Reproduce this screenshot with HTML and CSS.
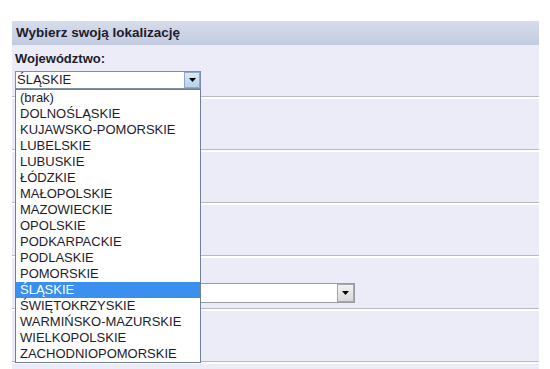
FILE: index.html
```html
<!DOCTYPE html>
<html lang="pl">
<head>
    <meta charset="UTF-8">
    <meta name="viewport" content="width=device-width, initial-scale=1.0">
    <title>Wybierz swoją lokalizację</title>
    <link rel="stylesheet" href="styles.css">
</head>
<body>
    <div id="location-panel">
        <div class="panel-head">Wybierz swoją lokalizację</div>

        <div class="row row-first">
            <div class="label">Województwo:</div>
            <div class="combo combo-open">
                <span class="combo-value">ŚLĄSKIE</span>
                <span class="combo-btn">
                    <svg width="7" height="4" viewBox="0 0 7 4"><path d="M0 0h7L3.5 4z" fill="#000"/></svg>
                </span>
                <ul class="combo-list">
                    <li>(brak)</li>
                    <li>DOLNOŚLĄSKIE</li>
                    <li>KUJAWSKO-POMORSKIE</li>
                    <li>LUBELSKIE</li>
                    <li>LUBUSKIE</li>
                    <li>ŁÓDZKIE</li>
                    <li>MAŁOPOLSKIE</li>
                    <li>MAZOWIECKIE</li>
                    <li>OPOLSKIE</li>
                    <li>PODKARPACKIE</li>
                    <li>PODLASKIE</li>
                    <li>POMORSKIE</li>
                    <li class="selected">ŚLĄSKIE</li>
                    <li>ŚWIĘTOKRZYSKIE</li>
                    <li>WARMIŃSKO-MAZURSKIE</li>
                    <li>WIELKOPOLSKIE</li>
                    <li>ZACHODNIOPOMORSKIE</li>
                </ul>
            </div>
        </div>

        <div class="row"></div>
        <div class="row"></div>
        <div class="row"></div>
        <div class="row row-field">
            <div class="combo combo-wide">
                <span class="combo-value"></span>
                <span class="combo-btn">
                    <svg width="7" height="4" viewBox="0 0 7 4"><path d="M0 0h7L3.5 4z" fill="#000"/></svg>
                </span>
            </div>
        </div>
        <div class="row"></div>
        <div class="row"></div>
    </div>
</body>
</html>
```

FILE: styles.css
```css
body {
    margin: 0;
    font-family: "Liberation Sans", Arial, sans-serif;
    font-size: 13px;
    color: #1e1b2c;
    background: #fff;
}
#location-panel {
    width: 527px;
    margin: 21px 0 0 12px;
}
.panel-head {
    height: 24px;
    line-height: 24px;
    padding-left: 4px;
    font-weight: bold;
    font-size: 13.5px;
    background: linear-gradient(#d6dcea, #c2cbe0);
}
.row {
    height: 45px;
    padding: 5px 3px 0;
    background: #ececf8;
    border-bottom: 1px solid #b9b9c2;
    margin-bottom: 2px;
}
.row-first {
    height: 45px;
    padding-top: 6px;
}
.row-field {
    height: 25px;
    padding-top: 25px;
}
.label {
    font-weight: bold;
    line-height: 16px;
    margin-bottom: 4px;
}
.combo {
    position: relative;
    display: flex;
    width: 186px;
    height: 18px;
    box-sizing: border-box;
    border: 1px solid #7c8fa3;
    background: #fff;
}
.combo-wide {
    width: 340px;
    height: 20px;
    border-color: #9a9aa2;
}
.combo-value {
    flex: 1;
    padding-left: 1px;
    line-height: 16px;
}
.combo-btn {
    width: 16px;
    display: flex;
    align-items: center;
    justify-content: center;
    box-sizing: border-box;
    border: 1px solid #8fa9c6;
    background: linear-gradient(#dbe9f8, #b6d1ef);
}
.combo-wide .combo-btn {
    width: 17px;
    border-color: #a8a8a8;
    background: linear-gradient(#f2f2f2, #d8d8d8);
}
.combo-list {
    position: absolute;
    top: 17px;
    left: -1px;
    z-index: 2;
    width: 186px;
    box-sizing: border-box;
    margin: 0;
    padding: 0;
    list-style: none;
    background: #fff;
    border: 1px solid #6f8193;
}
.combo-list li {
    height: 16px;
    line-height: 16px;
    padding-left: 4px;
    white-space: nowrap;
}
.combo-list li.selected {
    background: #3a8fef;
    color: #fff;
}
```
